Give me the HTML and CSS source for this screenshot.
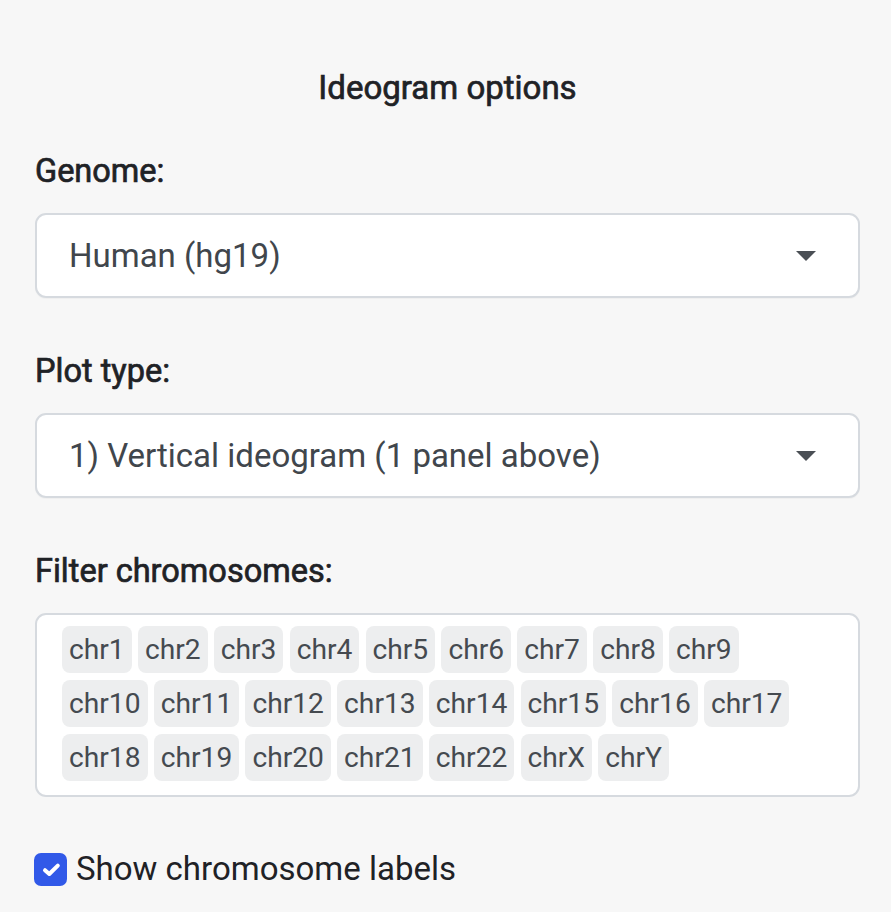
FILE: index.html
```html
<!DOCTYPE html>
<html lang="en">
<head>
<meta charset="utf-8">
<title>Ideogram options</title>
<link rel="stylesheet" href="styles.css">
</head>
<body>
<div class="panel">
  <h2 class="title">Ideogram options</h2>

  <div class="field">
    <label class="label">Genome:</label>
    <div class="select">
      <span class="select-value">Human (hg19)</span>
      <svg class="caret" width="20" height="10" viewBox="0 0 20 10"><path d="M0 0H20L10 10Z" fill="#4a4f55"/></svg>
    </div>
  </div>

  <div class="field">
    <label class="label">Plot type:</label>
    <div class="select">
      <span class="select-value">1) Vertical ideogram (1 panel above)</span>
      <svg class="caret" width="20" height="10" viewBox="0 0 20 10"><path d="M0 0H20L10 10Z" fill="#4a4f55"/></svg>
    </div>
  </div>

  <div class="field">
    <label class="label">Filter chromosomes:</label>
    <div class="multi">
      <span class="chip">chr1</span><span class="chip">chr2</span><span class="chip">chr3</span><span class="chip">chr4</span><span class="chip">chr5</span><span class="chip">chr6</span><span class="chip">chr7</span><span class="chip">chr8</span><span class="chip">chr9</span>
      <span class="chip">chr10</span><span class="chip">chr11</span><span class="chip">chr12</span><span class="chip">chr13</span><span class="chip">chr14</span><span class="chip">chr15</span><span class="chip">chr16</span><span class="chip">chr17</span>
      <span class="chip">chr18</span><span class="chip">chr19</span><span class="chip">chr20</span><span class="chip">chr21</span><span class="chip">chr22</span><span class="chip">chrX</span><span class="chip">chrY</span>
    </div>
  </div>

  <div class="check">
    <span class="box">
      <svg width="33" height="33" viewBox="0 0 33 33"><path d="M11 17.2L15.3 21L23.8 12.6" fill="none" stroke="#fff" stroke-width="4" stroke-linecap="round" stroke-linejoin="round"/></svg>
    </span>
    <span class="check-label">Show chromosome labels</span>
  </div>
</div>
</body>
</html>
```

FILE: styles.css
```css
html, body {
  margin: 0;
  padding: 0;
  background: #f7f7f7;
}
body {
  font-family: Roboto, "Liberation Sans", sans-serif;
  color: #212529;
}
.panel {
  width: 825px;
  margin-left: 35px;
  padding-top: 69px;
}
.title {
  margin: 0;
  text-align: center;
  font-size: 33px;
  font-weight: 400;
  -webkit-text-stroke: 0.7px #1f2226;
  line-height: 38px;
  color: #1f2226;
}
.field {
  margin-top: 45px;
  display: flex;
  flex-direction: column;
}
.field + .field {
  margin-top: 54px;
}
.label {
  font-size: 32.5px;
  font-weight: 400;
  -webkit-text-stroke: 0.7px #1f2226;
  line-height: 38px;
  color: #1f2226;
  margin-bottom: 23px;
}
.select {
  box-sizing: border-box;
  height: 85px;
  border: 2px solid #d6dadf;
  border-radius: 11px;
  background: #fff;
  display: flex;
  align-items: center;
  justify-content: space-between;
  padding: 0 42px 0 32px;
  box-shadow: 0 1px 1px rgba(0,0,0,0.03);
}
.select-value {
  font-size: 33px;
  color: #41464c;
  line-height: 38px;
}
.caret {
  display: block;
}
.multi {
  box-sizing: border-box;
  border: 2px solid #d6dadf;
  border-radius: 11px;
  background: #fff;
  padding: 11px 50px 14px 25px;
  display: flex;
  flex-wrap: wrap;
  gap: 7px 6.2px;
}
.chip {
  height: 47px;
  line-height: 47px;
  padding: 0 7px;
  border-radius: 8px;
  background: #edeeef;
  color: #454a50;
  font-size: 28.2px;
}
.check {
  margin-top: 53px;
  display: flex;
  align-items: center;
  margin-left: -1px;
}
.box {
  width: 33px;
  height: 33px;
  border-radius: 7px;
  background: #3159e8;
  display: flex;
}
.check-label {
  margin-left: 9px;
  font-size: 33px;
  line-height: 38px;
  color: #1f2226;
}
```
